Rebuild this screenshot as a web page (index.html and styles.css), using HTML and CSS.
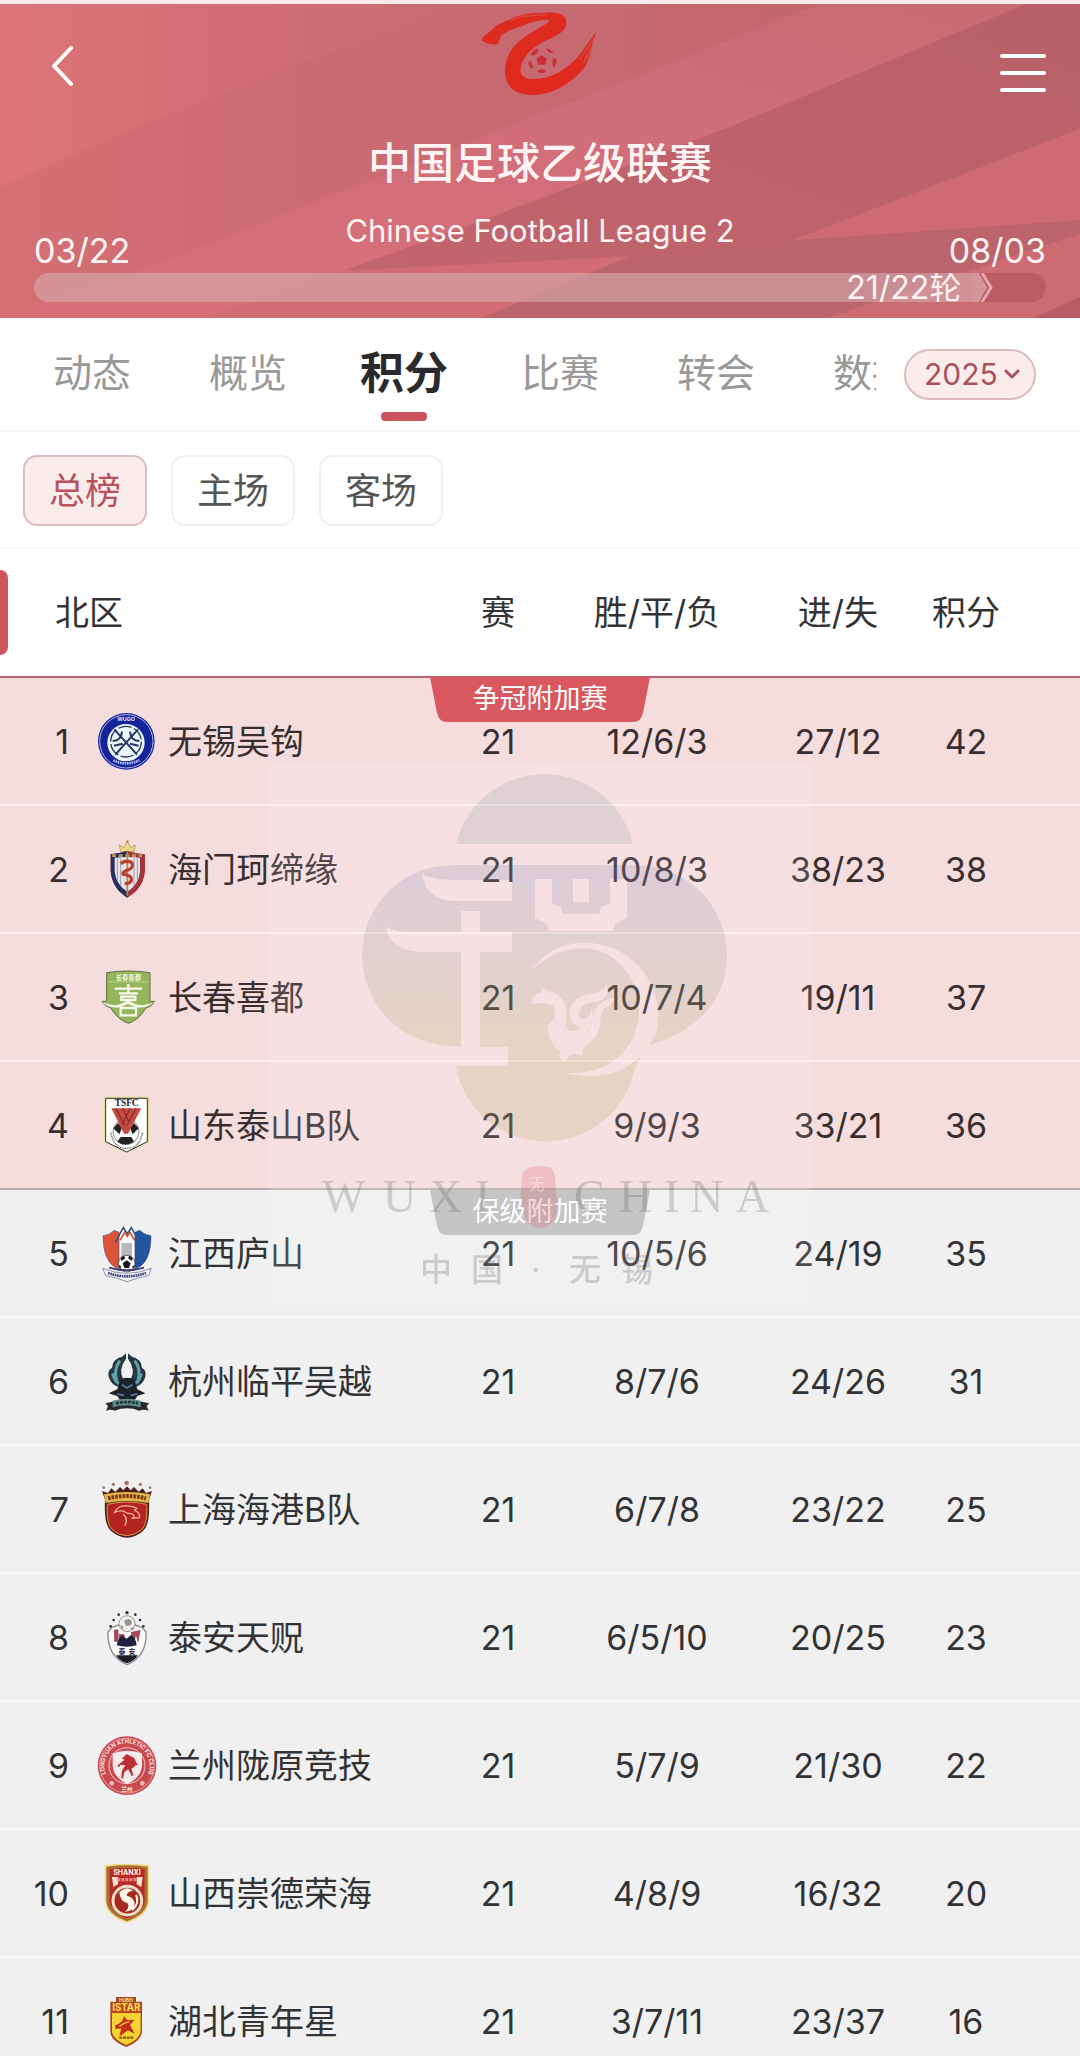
FILE: index.html
```html
<!DOCTYPE html>
<html lang="zh-CN">
<head>
<meta charset="utf-8">
<meta name="viewport" content="width=device-width, initial-scale=1">
<title>中国足球乙级联赛 - 积分</title>
<link rel="stylesheet" href="styles.css">
</head>
<body>
<div class="app">
  <header class="hero">
    <svg class="hero-bg" viewBox="0 12 1568 940" preserveAspectRatio="none" aria-hidden="true">
      <defs>
        <linearGradient id="base" x1="0" y1="0" x2="1" y2="0">
          <stop offset="0" stop-color="#dd7578"/><stop offset=".25" stop-color="#cf6d73"/><stop offset=".55" stop-color="#c66a73"/><stop offset="1" stop-color="#b65d64"/>
        </linearGradient>
        <linearGradient id="band" x1="0" y1="1" x2="1" y2="0">
          <stop offset="0" stop-color="#d96f77"/><stop offset=".6" stop-color="#d06e79"/><stop offset="1" stop-color="#c96a72"/>
        </linearGradient>
        <linearGradient id="dark" x1="0" y1="1" x2="1" y2="0">
          <stop offset="0" stop-color="#c4656e"/><stop offset="1" stop-color="#b86168"/>
        </linearGradient>
      </defs>
      <path fill="url(#base)" d="M0 12H1568V952H0z"/>
      <path fill="#c7686f" opacity=".4" d="M660 12H1190L540 540 230 790 0 952V560L200 380z"/>
      <path fill="url(#band)" d="M1190 12H1490L1060 380 700 660 500 810 300 952H0L230 790 540 540z"/>
      <path fill="url(#dark)" d="M1490 12H1568V385L1150 720 860 952H300L500 810 700 660 1060 380z"/>
      <path fill="#cd6b71" d="M1568 385V660L1150 720z"/>
      <path fill="#d26c73" d="M500 810 915 768 700 952H300z"/>
      <path fill="#bb646b" d="M1150 720 1568 660V700L1200 952H700L915 768z"/>
      <path fill="#cc6b72" d="M1568 700V890L1500 952H1200z"/>
    </svg>
    <div class="topbar">
      <button class="icon-btn back" type="button" aria-label="返回">
        <svg width="24" height="40" viewBox="0 0 24 40"><path d="M21 2 4 20l17 18" fill="none" stroke="#fff" stroke-width="4" stroke-linecap="round" stroke-linejoin="round"/></svg>
      </button>
      <svg class="league-logo" width="118" height="86" viewBox="124 30 354 258" role="img" aria-label="中乙联赛">
        <path fill="#de2a1f" d="M125 116c8-14 22-20 32-28 8-14 26-22 44-28 30-16 60-26 92-24 26-2 62-4 78 8 14 12 12 34-4 48-22 18-50 24-72 40-24 16-42 34-50 60-8 28 2 42 38 42 56-2 92-26 132-66l55-76-12 40-8 34-12 30c-28 34-66 66-116 80-44 12-98 8-116-26-20-36-8-82 14-110 22-26 52-44 82-62 16-8 28-16 26-20-6-6-50 2-78 16-26 8-48 16-64 28l-12 28c-18 2-40-4-49-14z"/>
        <path stroke="#cf6a72" stroke-width="2" fill="none" d="M420 176l44-66M428 190l38-76M436 186l30-62M210 60l44-18M250 46l70-5"/>
        <g fill="#c93036"><path d="M306 163l16 11-6 17h-20l-6-17z"/><path d="M272 160l14-15 11-2-6 16-12 5zM318 142l15 4 9 10-14-1zM348 170l4 12-9 18-6-10 3-16zM268 178l10 10 2 16-10-6-4-12zM292 210l14-6 16 7-10 5h-12z"/></g>
      </svg>
      <button class="icon-btn menu" type="button" aria-label="菜单">
        <svg width="46" height="38" viewBox="0 0 46 38"><path d="M2 2h42M2 19h42M2 36h42" stroke="#fff" stroke-width="4" stroke-linecap="round"/></svg>
      </button>
    </div>
    <h1 class="title">中国足球乙级联赛</h1>
    <div class="dates">
      <span class="date">03/22</span>
      <span class="subtitle">Chinese Football League 2</span>
      <span class="date date-end">08/03</span>
    </div>
    <div class="progress" role="progressbar" aria-valuemin="0" aria-valuemax="22" aria-valuenow="21" aria-label="赛季进度">
      <div class="progress-fill" style="width:95%">
        <span class="round">21/22轮</span>
        <svg width="22" height="29" viewBox="0 0 22 29" aria-hidden="true"><path d="M0 0h6l8 14.500-8 14.500H0z" fill="#fff" opacity=".36"/><path d="M9 0l9 14.500L9 29" fill="none" stroke="#f3c9cc" stroke-width="3" opacity=".7"/></svg>
      </div>
    </div>
  </header>

  <div class="tabs-row">
    <nav class="tabs">
      <a class="tab" href="#news">动态</a>
      <a class="tab" href="#overview">概览</a>
      <a class="tab active" href="#standings" aria-current="page">积分</a>
      <a class="tab" href="#matches">比赛</a>
      <a class="tab" href="#transfers">转会</a>
      <a class="tab" href="#data">数据</a>
    </nav>
    <div class="season">
      <select class="season-select" aria-label="赛季"><option>2025</option></select>
      <svg class="season-arrow" width="16" height="10" viewBox="0 0 16 10" aria-hidden="true"><path d="M2 2l6 6 6-6" fill="none" stroke="#a9525c" stroke-width="3" stroke-linecap="round" stroke-linejoin="round"/></svg>
    </div>
  </div>

  <div class="filters">
    <button class="filter on" type="button" aria-pressed="true">总榜</button>
    <button class="filter" type="button" aria-pressed="false">主场</button>
    <button class="filter" type="button" aria-pressed="false">客场</button>
  </div>

  <main class="board">
    <table class="standings">
      <colgroup><col class="c-rank"><col class="c-logo"><col><col class="c-games"><col class="c-wdl"><col class="c-goals"><col class="c-pts"></colgroup>
      <thead>
        <tr><th class="zone" colspan="3" scope="col">北区</th><th scope="col">赛</th><th scope="col">胜/平/负</th><th scope="col">进/失</th><th class="pts" scope="col">积分</th></tr>
      </thead>
      <tbody class="up">
        <tr><td class="rank">1</td><td class="logo"><svg viewBox="51 60 180 180">
          <circle cx="139" cy="151" r="85" fill="#16249a"/><circle cx="139" cy="151" r="80" fill="none" stroke="#aeb8ea" stroke-width="3"/><circle cx="138" cy="155" r="56" fill="#e9f6fc"/>
          <circle cx="138" cy="152" r="46" fill="none" stroke="#27345c" stroke-width="4" stroke-dasharray="40 8"/><path d="M103 115l68 76M174 115l-68 76M98 150q26 0 28-28M178 150q-26 0-28-28M102 164l26-6M176 164l-26-6" fill="none" stroke="#27345c" stroke-width="6"/>
          <text x="138" y="91" font-size="16" font-weight="700" fill="#dfe5ff" text-anchor="middle" class="lt">WUGO</text><path d="M100 208q38 18 78 0" stroke="#aeb8ea" stroke-width="8" stroke-dasharray="5 2" fill="none"/></svg></td><td class="name">无锡吴钩</td><td>21</td><td>12/6/3</td><td>27/12</td><td class="pts">42</td></tr>
        <tr><td class="rank">2</td><td class="logo"><svg viewBox="51 446 180 180">
          <path d="M122 484l-4-20 13 8 11-18 11 18 13-8-4 20z" fill="#f0d68a" stroke="#a8853c" stroke-width="2"/><circle cx="142" cy="454" r="4" fill="#b8933f"/>
          <path d="M92 492q24-2 50-10 28 8 53 10v50q-4 52-53 80-46-28-50-80z" fill="#a3343a"/><path d="M92 492q24-2 50-10v140q-46-28-50-80z" fill="#26305e"/>
          <path d="M104 502q38-4 76 0v42q-4 38-38 60-34-22-38-60z" fill="#e9e3e8"/><path d="M112 504v66M122 504v82M162 504v82M172 504v66" stroke="#9a9db8" stroke-width="3"/>
          <path d="M96 496l90 0" stroke="#bb9450" stroke-width="8" stroke-dasharray="12 8"/><path d="M142 484v132" stroke="#b18948" stroke-width="5"/>
          <path d="M122 520q14-12 32-4 10 14-8 22-22 8-16 14 26 2 24 18-4 10-20 10" fill="none" stroke="#b8432c" stroke-width="10"/></svg></td><td class="name">海门珂缔缘</td><td>21</td><td>10/8/3</td><td>38/23</td><td class="pts">38</td></tr>
        <tr><td class="rank">3</td><td class="logo"><svg viewBox="51 85 180 180">
          <path d="M80 102q64-10 130 0v86h14q-10 18-26 20-22 36-52 46-32-10-54-46-16-4-26-20h14z" fill="#94b55c" stroke="#5d6e42" stroke-width="3"/><path d="M84 130h124" stroke="#c9dca2" stroke-width="2"/>
          <text x="145" y="124" font-size="19" font-weight="700" fill="#f0f8dc" text-anchor="middle" class="lt">长春喜都</text>
          <path d="M68 190q30 16 54 6l22-10 22 10q28 10 56-6-20 20-54 16l-24-10-24 10q-36 4-52-16z" fill="#f7faea"/>
          <g fill="none" stroke="#f7faea" stroke-width="7"><path d="M104 150h82M145 136v28M116 164h58M124 174h42v10h-42zM122 208h46v22h-46z"/></g></svg></td><td class="name">长春喜都</td><td>21</td><td>10/7/4</td><td>19/11</td><td class="pts">37</td></tr>
        <tr><td class="rank">4</td><td class="logo"><svg viewBox="51 462 180 180">
          <path d="M72 467h136v136l-68 34-68-34z" fill="#e3dc8f"/><path d="M77 472h125v130l-62 31-63-31z" fill="#fff" stroke="#333" stroke-width="3"/>
          <text x="140" y="496" font-size="28" font-weight="700" fill="#222" text-anchor="middle" class="ls">TSFC</text>
          <circle cx="138" cy="572" r="39" fill="#fafafa" stroke="#555" stroke-width="2"/><path d="M100 562l14-16 12 14-8 20zM176 562l-14-16-12 14 8 20zM122 588h32l8 14-16 8h-20l-14-8z" fill="#222"/><path d="M94 502h90l-40 76h-12z" fill="#c74a40"/><path d="M108 502l26 52M128 502l18 38M150 502l-22 48M168 502l-28 54" stroke="#6b2824" stroke-width="3"/>
          <path d="M92 574q10 50 48 48 38 2 48-48" fill="none" stroke="#777" stroke-width="5" stroke-dasharray="3 2"/></svg></td><td class="name">山东泰山B队</td><td>21</td><td>9/9/3</td><td>33/21</td><td class="pts">36</td></tr>
      </tbody>
      <tbody class="down">
        <tr><td class="rank">5</td><td class="logo"><svg viewBox="51 38 180 180">
          <path d="M66 74q22-2 36-18l14 6 25-16 25 16 14-6q14 16 36 18 2 66-30 98l-45 24-45-24q-34-32-30-98z" fill="#fff"/>
          <path d="M69 76q20-2 34-16l14 6v110q-48-16-48-100z" fill="#dc5335" stroke="#4a5b80" stroke-width="2"/><path d="M213 76q-20-2-34-16l-14 6v110q48-16 48-100z" fill="#2354a0" stroke="#2c4478" stroke-width="2"/>
          <path d="M124 98h32v46h-32z" fill="#b9b9bd"/><path d="M106 96l14-26 10-18 12 18 12-18 10 18 14 26" fill="none" stroke="#31568c" stroke-width="5"/><path d="M120 90l14-24 8 12 8-12 14 24" fill="none" stroke="#d2503a" stroke-width="5"/>
          <circle cx="140" cy="160" r="25" fill="#fff" stroke="#222" stroke-width="2"/><path d="M140 150l12 9-5 14h-14l-5-14zM122 142l10-6 4 8-12 8zM158 142l-10-6-4 8 12 8zM116 164l7 4-2 12zM164 164l-7 4 2 12z" fill="#181818"/>
          <path d="M68 174q72 30 146 0l-8 22q-34 6-65 18-30-12-64-18z" fill="#f4f4f8" stroke="#5a608e" stroke-width="2"/><path d="M84 188q56 20 114 0" fill="none" stroke="#39427e" stroke-width="8" stroke-dasharray="5 2"/><path d="M88 172q52 16 104 0" fill="none" stroke="#3d3c78" stroke-width="6"/></svg></td><td class="name">江西庐山</td><td>21</td><td>10/5/6</td><td>24/19</td><td class="pts">35</td></tr>
        <tr><td class="rank">6</td><td class="logo"><svg viewBox="51 423 180 180">
          <path d="M138 430l-12 10q-28 6-30 34-14 6-10 26 8 28 36 32l10-20q-20-32 6-66zM144 430l12 10q28 6 30 34 14 6 10 26-8 28-36 32l-10-20q20-32-6-66z" fill="#26383f"/>
          <path d="M120 452q-20 26-10 60M164 452q20 26 10 60M98 490q6 26 24 34M184 490q-6 26-24 34" stroke="#5f9fae" stroke-width="9" fill="none"/>
          <path d="M120 510q22-14 44 0l8 28 24 12-24 8q-10 20-30 20t-30-20l-26-8 26-12z" fill="#1b2029"/><path d="M126 524l14 10 18-10M112 552l20 4M172 552l-20 4" stroke="#5b7fa5" stroke-width="5" fill="none"/>
          <path d="M76 580l28-6q36-14 74 0l30 6-8 8 6 14q-16-6-28 0-38-14-74 0-12-6-26 0l6-14z" fill="#252b2f"/><path d="M98 572q42-12 84 0v20q-42-12-84 0z" fill="#5f8d91"/><path d="M108 580q32-8 66 0" fill="none" stroke="#233" stroke-width="8" stroke-dasharray="9 3"/></svg></td><td class="name">杭州临平吴越</td><td>21</td><td>8/7/6</td><td>24/26</td><td class="pts">31</td></tr>
        <tr><td class="rank">7</td><td class="logo"><svg viewBox="51 58 180 180">
          <g fill="#a8765c"><circle cx="140" cy="70" r="7"/><circle cx="100" cy="74" r="5"/><circle cx="181" cy="74" r="5"/><circle cx="71" cy="84" r="4"/><circle cx="210" cy="84" r="4"/></g>
          <path d="M66 94l18 6 10-14 12 10 14-14 10 10 11-12 11 12 10-10 14 14 12-10 10 14 18-6-9 26q4 76-18 94-24 20-48 20t-48-20q-22-18-18-94z" fill="#4b2018"/><path d="M72 104q68-14 138 0l-5 26q-64-12-128 0z" fill="#e3b64b"/><path d="M84 116q56-14 114 0" stroke="#7a3a1d" stroke-width="12" stroke-dasharray="8 3" fill="none"/>
          <path d="M82 134q58-14 118 0 4 56-14 76-22 18-46 18t-44-18q-18-20-14-76z" fill="#b3231f" stroke="#d9974a" stroke-width="3"/><path d="M104 158q10-20 32-20 24 2 34 8l-6 6q18 8 14 22l-20 2q10-8-4-14-14 0-24-8-12-2-26 4zM130 164q16 14 4 34" fill="none" stroke="#f2b0a6" stroke-width="4"/></svg></td><td class="name">上海海港B队</td><td>21</td><td>6/7/8</td><td>23/22</td><td class="pts">25</td></tr>
        <tr><td class="rank">8</td><td class="logo"><svg viewBox="51 445 180 180">
          <path d="M96 506q44-20 90 0l12 14q4 72-57 98-60-26-57-98z" fill="#fafafa" stroke="#8a8a8a" stroke-width="4"/><g fill="#333"><circle cx="141" cy="462" r="5"/><circle cx="116" cy="468" r="4"/><circle cx="166" cy="468" r="4"/><circle cx="101" cy="484" r="4"/><circle cx="180" cy="484" r="4"/><circle cx="92" cy="503" r="4"/><circle cx="190" cy="503" r="4"/></g>
          <circle cx="141" cy="495" r="24" fill="#efefef" stroke="#999" stroke-width="3"/><path d="M132 486l14-6 10 8-4 12-14 2zM120 500l10 2-2 12zM150 510l12-6-2 10z" fill="#9b9284"/>
          <path d="M104 514h10v34h-10zM118 528h14v20h-14zM154 520l8 28 6-24 6 24 6-34" fill="#a5465a" stroke="#a5465a" stroke-width="3"/><path d="M110 560q4-20 16-30l14 10 14-12q14 10 16 32-30 8-60 0z" fill="#1f2140"/>
          <path d="M98 566h86l-8 20h-70z" fill="#fff"/><text x="126" y="585" font-size="21" font-weight="700" fill="#222440" text-anchor="middle" class="lt">泰</text><text x="156" y="585" font-size="21" font-weight="700" fill="#222440" text-anchor="middle" class="lt">安</text><path d="M108 590h66q-12 18-33 24-22-6-33-24z" fill="#1d1d26"/></svg></td><td class="name">泰安天贶</td><td>21</td><td>6/5/10</td><td>20/25</td><td class="pts">23</td></tr>
        <tr><td class="rank">9</td><td class="logo"><svg viewBox="51 49 180 180">
          <defs><path id="ring" d="M79 170a68 68 0 1 1 124 0"/></defs>
          <circle cx="141" cy="141" r="88" fill="#c94a50"/><circle cx="141" cy="141" r="82" fill="none" stroke="#f0c9ca" stroke-width="2"/><circle cx="141" cy="141" r="54" fill="#c94a50" stroke="#f0c9ca" stroke-width="3"/>
          <path d="M98 104q44-16 88 0v38q-4 36-44 54-40-18-44-54z" fill="#f4eaea"/><path d="M126 120l14-14 10 6q16 4 18 20l8 6-10 2q-2 8-12 10l6 20-5 2-10-20-12 8-4 20-5-2 2-22 10-16-14-2-6 8-4-5 14-12 8-6z" fill="#bb2c34"/>
          <text font-size="17" font-weight="700" fill="#fbe6e6" class="lt"><textPath href="#ring" startOffset="50%" text-anchor="middle">LONGYUAN ATHLETIC FC CLUB</textPath></text><text x="141" y="218" font-size="17" font-weight="700" fill="#fbe6e6" text-anchor="middle" class="lt">兰州</text><circle cx="95" cy="194" r="7" fill="#eebcbe"/><circle cx="187" cy="194" r="7" fill="#eebcbe"/></svg></td><td class="name">兰州陇原竞技</td><td>21</td><td>5/7/9</td><td>21/30</td><td class="pts">22</td></tr>
        <tr><td class="rank">10</td><td class="logo"><svg viewBox="51 432 180 180">
          <path d="M74 438q66-8 134 0v108q-2 44-67 66-64-22-67-66z" fill="#f5d98a"/><path d="M79 443q62-8 124 0v102q-2 40-62 62-60-22-62-62z" fill="#a8702f"/><path d="M89 450q52-6 105 0v96q-4 34-53 52-48-18-52-52z" fill="#b82a2a"/>
          <text x="141" y="468" font-size="21" font-weight="700" fill="#fff3e0" text-anchor="middle" class="lt">SHANXI</text><path d="M96 474h18v22l-14 8zM188 474h-18v22l14 8z" fill="#f6e3cf"/><path d="M112 482h60" stroke="#e7897c" stroke-width="10" stroke-dasharray="9 3"/>
          <circle cx="142" cy="545" r="43" fill="#a32a1e" stroke="#f3ddc4" stroke-width="9"/><path d="M118 520q24-22 42-4-18 0-20 14 20 4 24 22 0 26-30 26 18-12 8-26-22-4-24-32z" fill="#fff6ec"/><path d="M168 528q12 26-12 46" stroke="#fff6ec" stroke-width="6" fill="none"/></svg></td><td class="name">山西崇德荣海</td><td>21</td><td>4/8/9</td><td>16/32</td><td class="pts">20</td></tr>
        <tr><td class="rank">11</td><td class="logo"><svg viewBox="51 820 180 180">
          <path d="M108 838h60v14h18v92q-2 26-47 44-46-18-48-44v-92h17z" fill="#a6461f"/><path d="M96 886h86v56q-2 22-43 40-42-18-43-40z" fill="#f6d332"/><path d="M94 856h90v28h-90z" fill="#c4451e"/>
          <text x="138" y="853" font-size="14" font-weight="700" fill="#ffe08a" text-anchor="middle" class="lt">HUBEI</text><text x="139" y="881" font-size="29" font-weight="700" fill="#ffdf5e" text-anchor="middle" class="lt">ISTAR</text>
          <path d="M106 922q22-4 26-26l10 12 22-2-14 16 14 26-20-10-26 18 6-24-18 2z" fill="#c52c1e"/><path d="M118 926q16-12 30-14" stroke="#f6d332" stroke-width="4" fill="none"/><path d="M118 960h42" stroke="#8c5a1c" stroke-width="7" stroke-dasharray="9 2"/></svg></td><td class="name">湖北青年星</td><td>21</td><td>3/7/11</td><td>23/37</td><td class="pts">16</td></tr>
      </tbody>
    </table>
    <div class="badge badge-up"><svg class="badge-bg" viewBox="0 0 220 45" aria-hidden="true"><path d="M0 0h220l-7 36q-2 9-10 9H17q-8 0-10-9z" fill="currentColor"/></svg><span>争冠附加赛</span></div>
    <div class="badge badge-down"><svg class="badge-bg" viewBox="0 0 220 45" aria-hidden="true"><path d="M0 0h220l-7 36q-2 9-10 9H17q-8 0-10-9z" fill="currentColor"/></svg><span>保级附加赛</span></div>
    <svg class="watermark" width="542" height="540" viewBox="268 766 542 540" aria-hidden="true">
      <defs>
        <linearGradient id="wm" gradientUnits="userSpaceOnUse" x1="0" y1="773" x2="0" y2="1138"><stop offset="0" stop-color="#5a7a80"/><stop offset=".22" stop-color="#56708a"/><stop offset=".28" stop-color="#4a5a9a"/><stop offset=".5" stop-color="#6a7868"/><stop offset=".72" stop-color="#858a28"/><stop offset="1" stop-color="#958a20"/></linearGradient>
        <mask id="cut" maskUnits="userSpaceOnUse" x="268" y="766" width="542" height="540">
          <path fill="#fff" d="M268 766h542v540H268z"/>
          <g fill="#000">
            <path d="M421 874q8 5 30 6h60v21h-56q-30 0-34-27z"/>
            <path d="M385 927q8 5 26 5h49v-21h19v21h32v20h-32v95h28v19h-56v-19h9v-95h-40q-32-2-35-25z"/>
            <path d="M534 879h17v25l9 3 2 7h36l2-7 9-3v-25h17v39l-12 6-2 7h-64l-2-7-12-6zM572 879h16v23h-16z"/>
            <g transform="translate(510 930) scale(.3333)">
              <path d="M64 122C100 60 160 38 225 38c125 2 217 102 217 224 0 40-14 70-28 84l70-18-110 62c-50 46-120 60-214 38 140 12 220-78 224-178C388 140 310 55 215 55c-65 0-115 30-151 67z"/>
              <path d="M64 220q-2-26 24-32l8-16 14 12q40 4 54 44 6 34-2 58 8 22 30 16 14-6 18-12-34-4-34-40 4-50 60-58 34-4 52-28 6 26-8 40-14 12-38 14-36 2-40 34 4 14 16 16 20-6 24-34 8 40-12 66-8 14-14 22 26-22 30-64 10-46 64-54-6 22-26 28-14 8-16 40-2 50-50 78l-4 28-24-6-14 4-12 16-18-8 4-16q-34-24-40-68 0-20 18-30 12-24-4-44-26-10-36-6l-22 2z"/>
            </g>
          </g>
        </mask>
      </defs>
      <path fill="#fff" opacity=".12" d="M268 766h542v540H268z"/>
      <path mask="url(#cut)" fill="url(#wm)" opacity=".14" d="M455 844a91 91 0 0 1 177 0zM452 865h182a92 90 0 0 1 92 90q0 66-79 91l-13 21a91 91 0 0 1-179 0v-21h-3a91 91 0 0 1-91-91 91 90 0 0 1 91-90z"/>
      <path fill="#d83a4a" opacity=".2" d="M522 1172q12-10 28-4 6 6 4 20 4 12 2 24-4 16-18 16-14-2-16-18-4-20 0-38z"/>
      <text class="ls" fill="#555" opacity=".24" font-size="46" y="1212" x="321 382 428 474 573 618 663 689 735">WUXICHINA</text>
      <text class="lt" fill="#fff" opacity=".4" font-size="16" x="528" y="1190">无</text>
      <text class="lt" fill="#555" opacity=".24" font-size="32" font-weight="500" y="1281" x="419 470 530 568 620">中国·无锡</text>
    </svg>
  </main>
</div>
</body>
</html>
```

FILE: styles.css
```css
* { box-sizing: border-box; }

body {
  margin: 0;
  background: #fff;
  color: #333335;
  font-family: Inter, "Noto Sans CJK SC", sans-serif;
}

button, select { font: inherit; cursor: pointer; }

.app {
  display: flex;
  flex-direction: column;
  height: 100vh;
  overflow: hidden;
  border-top: 4px solid #fbeaec;
}

/* Header */
.hero {
  position: relative;
  flex: none;
  padding: 7px 34px 16px;
  color: #fff3f3;
  background: #cb6a72;
}
.hero-bg {
  position: absolute;
  inset: 0;
  width: 100%;
  height: 100%;
}
.topbar, .title, .dates, .progress { position: relative; }
.topbar {
  display: grid;
  grid-template-columns: 1fr auto 1fr;
  align-items: center;
  height: 124px;
}
.icon-btn {
  display: flex;
  height: 54px;
  padding: 0;
  border: 0;
  background: none;
}
.back { padding: 0 16px; }
.menu {
  justify-self: end;
  align-items: center;
}
.league-logo { align-self: start; }
.title {
  margin: 0;
  font-size: 43px;
  line-height: 56px;
  font-weight: 500;
  text-align: center;
}
.dates {
  display: grid;
  grid-template-columns: 1fr auto 1fr;
  height: 60px;
  margin-top: 20px;
  font-size: 34px;
  line-height: 40px;
}
.subtitle { font-size: 31px; }
.date { align-self: end; }
.date-end { text-align: right; }
.progress {
  height: 29px;
  margin-top: 2px;
  border-radius: 15px;
  background: rgba(150, 60, 72, .3);
  overflow: hidden;
}
.progress-fill {
  display: flex;
  justify-content: flex-end;
  height: 29px;
}
.round {
  flex: 1;
  padding-right: 12px;
  background: rgba(255, 255, 255, .33);
  font-size: 32px;
  line-height: 29px;
  text-align: right;
}

/* Tabs */
.tabs-row {
  display: flex;
  flex: none;
  align-items: center;
  height: 114px;
  padding: 0 44px 0 14px;
  border-bottom: 2px solid #f6f6f6;
}
.tabs {
  display: flex;
  flex: 1;
  height: 112px;
  margin-right: 28px;
  overflow: hidden;
}
.tab {
  position: relative;
  flex: 0 0 156px;
  color: #999;
  font-size: 39px;
  line-height: 110px;
  text-align: center;
  text-decoration: none;
}
.tab.active {
  color: #2a2a2c;
  font-size: 44px;
  font-weight: 700;
}
.tab.active::after {
  content: "";
  position: absolute;
  left: 55px;
  bottom: 9px;
  width: 46px;
  height: 9px;
  border-radius: 4px;
  background: #c9545d;
}
.season { position: relative; }
.season-select {
  appearance: none;
  display: block;
  width: 132px;
  height: 51px;
  padding: 0 0 0 18px;
  border: 2px solid #dcbcbf;
  border-radius: 26px;
  background: #fbecec;
  color: #a9525c;
  font-size: 30px;
}
.season-arrow {
  position: absolute;
  right: 16px;
  top: 20px;
  pointer-events: none;
}

/* Filters */
.filters {
  display: flex;
  flex: none;
  gap: 24px;
  height: 116px;
  padding: 23px 23px 0;
  border-bottom: 1px solid #f6f6f6;
}
.filter {
  width: 124px;
  height: 71px;
  padding: 0 0 6px;
  border: 2px solid #f0f0f0;
  border-radius: 14px;
  background: #fff;
  color: #555;
  font-size: 36px;
}
.filter.on {
  border-color: #dcbcbf;
  background: #fbecec;
  color: #b8525e;
}

/* Standings */
.board {
  position: relative;
  flex: 1;
  min-height: 0;
  overflow: hidden;
}
.standings {
  width: 100%;
  table-layout: fixed;
  border-collapse: separate;
  border-spacing: 0;
}
.c-rank { width: 86px; }
.c-logo { width: 82px; }
.c-games { width: 120px; }
.c-wdl { width: 198px; }
.c-goals { width: 164px; }
.c-pts { width: 160px; }

.standings th {
  height: 130px;
  padding: 0 0 4px;
  border-bottom: 2px solid #b8606c;
  font-size: 34px;
  font-weight: 400;
  text-align: center;
}
.standings .zone {
  position: relative;
  padding-left: 55px;
  text-align: left;
}
.zone::before {
  content: "";
  position: absolute;
  left: 0;
  top: 22px;
  width: 8px;
  height: 85px;
  border-radius: 0 8px 8px 0;
  background: #cf555c;
}
.standings td {
  height: 128px;
  padding: 0;
  font-size: 34px;
  text-align: center;
}
.standings .pts { padding-right: 68px; }
.standings .rank { padding-right: 17px; text-align: right; }
.standings .name {
  padding-bottom: 4px;
  text-align: left;
  white-space: nowrap;
}
.logo svg {
  display: block;
  width: 60px;
  height: 60px;
  margin: 0 auto;
}
.up td {
  border-bottom: 2px solid #fcefef;
  background: #f5dcdd;
  color: #382e30;
}
.up tr:last-child td { border-bottom-color: #b9adad; }
.down td {
  border-bottom: 2px solid #f8f8f8;
  background: #f0f0f0;
}

/* Zone badges and watermark lie over the rows */
.badge {
  position: absolute;
  left: 50%;
  width: 220px;
  height: 45px;
  transform: translateX(-50%);
  font-size: 27px;
  line-height: 43px;
  text-align: center;
}
.badge span { position: relative; color: #fff; }
.badge-bg { position: absolute; inset: 0; }
.badge-up { top: 129px; color: #d9585f; }
.badge-down { top: 642px; color: #bdbdbd; }
.watermark {
  position: absolute;
  left: 50%;
  top: 218px;
  transform: translateX(-50%);
  pointer-events: none;
}
.lt { font-family: Inter, "Noto Sans CJK SC", sans-serif; }
.ls { font-family: "Liberation Serif", serif; }
```
